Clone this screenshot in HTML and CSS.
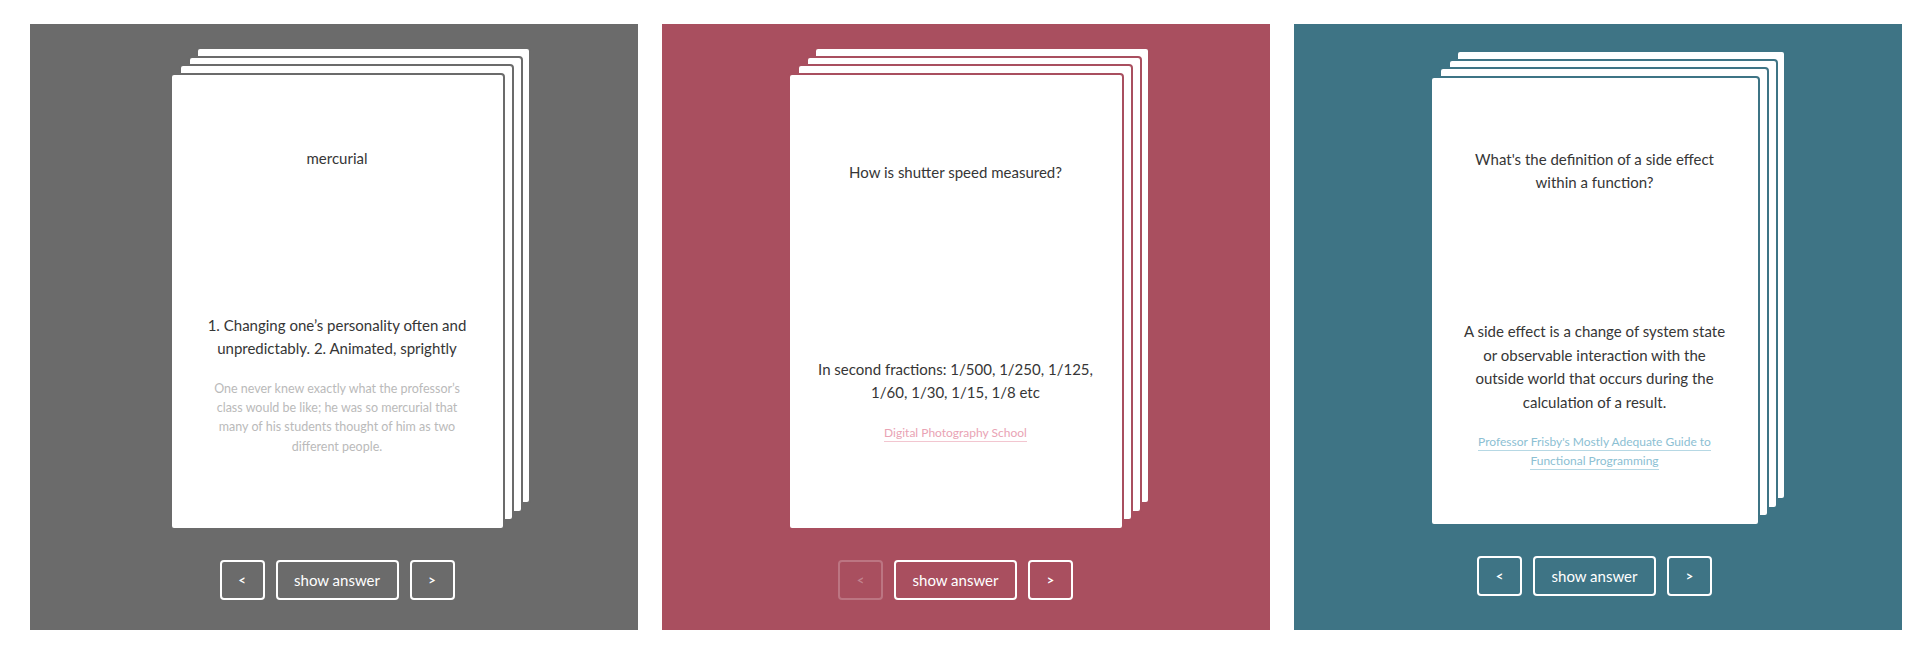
FILE: index.html
```html
<!DOCTYPE html>
<html lang="en">
<head>
<meta charset="utf-8">
<title>Flashcards</title>
<link rel="stylesheet" href="styles.css">
</head>
<body>
<main class="decks">
  <section class="deck deck--slate">
    <div class="stack">
      <div class="sheet sheet--3"></div>
      <div class="sheet sheet--2"></div>
      <div class="sheet sheet--1"></div>
      <article class="card">
        <p class="card__question">mercurial</p>
        <div class="card__answer">
          <p class="card__text">1. Changing one’s personality often and unpredictably. 2. Animated, sprightly</p>
          <p class="card__example">One never knew exactly what the professor’s class would be like; he was so mercurial that many of his students thought of him as two different people.</p>
        </div>
      </article>
    </div>
    <div class="controls">
      <button class="btn btn--arrow" type="button">&lt;</button>
      <button class="btn btn--wide" type="button">show answer</button>
      <button class="btn btn--arrow" type="button">&gt;</button>
    </div>
  </section>

  <section class="deck deck--rose">
    <div class="stack">
      <div class="sheet sheet--3"></div>
      <div class="sheet sheet--2"></div>
      <div class="sheet sheet--1"></div>
      <article class="card card--wide-text">
        <p class="card__question">How is shutter speed measured?</p>
        <div class="card__answer">
          <p class="card__text">In second fractions: 1/500, 1/250, 1/125, 1/60, 1/30, 1/15, 1/8 etc</p>
          <p class="card__source"><a class="card__link" href="#">Digital Photography School</a></p>
        </div>
      </article>
    </div>
    <div class="controls">
      <button class="btn btn--arrow btn--disabled" type="button">&lt;</button>
      <button class="btn btn--wide" type="button">show answer</button>
      <button class="btn btn--arrow" type="button">&gt;</button>
    </div>
  </section>

  <section class="deck deck--teal">
    <div class="stack">
      <div class="sheet sheet--3"></div>
      <div class="sheet sheet--2"></div>
      <div class="sheet sheet--1"></div>
      <article class="card card--tall-answer">
        <p class="card__question">What's the definition of a side effect within a function?</p>
        <div class="card__answer">
          <p class="card__text">A side effect is a change of system state or observable interaction with the outside world that occurs during the calculation of a result.</p>
          <p class="card__source"><a class="card__link" href="#">Professor Frisby's Mostly Adequate Guide to Functional Programming</a></p>
        </div>
      </article>
    </div>
    <div class="controls">
      <button class="btn btn--arrow" type="button">&lt;</button>
      <button class="btn btn--wide" type="button">show answer</button>
      <button class="btn btn--arrow" type="button">&gt;</button>
    </div>
  </section>
</main>
</body>
</html>
```

FILE: styles.css
```css
* {
  box-sizing: border-box;
}

html, body {
  margin: 0;
  padding: 0;
  background: #ffffff;
}

body {
  font-family: Lato, "Open Sans", "Liberation Sans", sans-serif;
}

.decks {
  display: flex;
  gap: 24px;
  padding: 24px 30px;
}

.deck {
  --bg: #6b6b6b;
  --card-w: 335px;
  --card-h: 457px;
  --link: #e9a3b4;
  --link-line: #f2c6d0;
  width: 608px;
  height: 606px;
  flex: none;
  background: var(--bg);
  display: flex;
  flex-direction: column;
  align-items: center;
  padding-top: 23px;
}

.deck--slate {
  --bg: #6b6b6b;
  padding-left: 6px;
}

.deck--rose {
  --bg: #a94f5f;
  --card-w: 336px;
  padding-right: 21px;
}

.deck--teal {
  --bg: #3e7485;
  --card-w: 330px;
  --card-h: 450px;
  --link: #8cc0d3;
  --link-line: #b6d8e4;
  padding-top: 26px;
  padding-right: 7px;
}

.stack {
  position: relative;
  width: var(--card-w);
  height: var(--card-h);
  margin-top: 26px;
  flex: none;
}

.sheet,
.card {
  background: #ffffff;
  border: 2px solid var(--bg);
  border-radius: 4px;
}

.sheet {
  position: absolute;
  width: 100%;
  height: 100%;
}

.sheet--1 {
  left: 9px;
  top: -9px;
  z-index: 3;
}

.sheet--2 {
  left: 18px;
  top: -17px;
  z-index: 2;
}

.sheet--3 {
  left: 26px;
  top: -26px;
  z-index: 1;
}

.card {
  position: relative;
  z-index: 4;
  width: 100%;
  height: 100%;
  display: flex;
  flex-direction: column;
  justify-content: space-around;
  padding: 0 30px;
  text-align: center;
  color: #363636;
}

.card--wide-text {
  padding: 0 18px;
}

.card--tall-answer {
  padding-top: 16px;
}

.card--tall-answer .card__answer {
  margin-top: 18px;
}

.card p {
  margin: 0;
}

.card__question,
.card__text {
  font-size: 15px;
  line-height: 23.5px;
}

.card__example {
  margin-top: 18px !important;
  font-size: 12.5px;
  line-height: 19.4px;
  color: #bababa;
}

.card__source {
  margin-top: 18px !important;
  font-size: 12px;
  line-height: 19px;
}

.card__link {
  color: var(--link);
  text-decoration: none;
  border-bottom: 1px solid var(--link-line);
  padding-bottom: 1px;
}

.controls {
  display: flex;
  gap: 11px;
  margin-top: 30px;
}

.btn {
  height: 40px;
  border: 2px solid #ffffff;
  border-radius: 4px;
  background: transparent;
  color: #ffffff;
  font-family: Lato, "Open Sans", "Liberation Sans", sans-serif;
  font-size: 15px;
  padding: 0;
  cursor: pointer;
}

.btn--arrow {
  width: 45px;
  font-size: 13px;
  font-weight: 700;
}

.btn--wide {
  width: 123px;
}

.btn--disabled {
  border-color: rgba(255, 255, 255, 0.22);
  color: rgba(255, 255, 255, 0.3);
}
```
